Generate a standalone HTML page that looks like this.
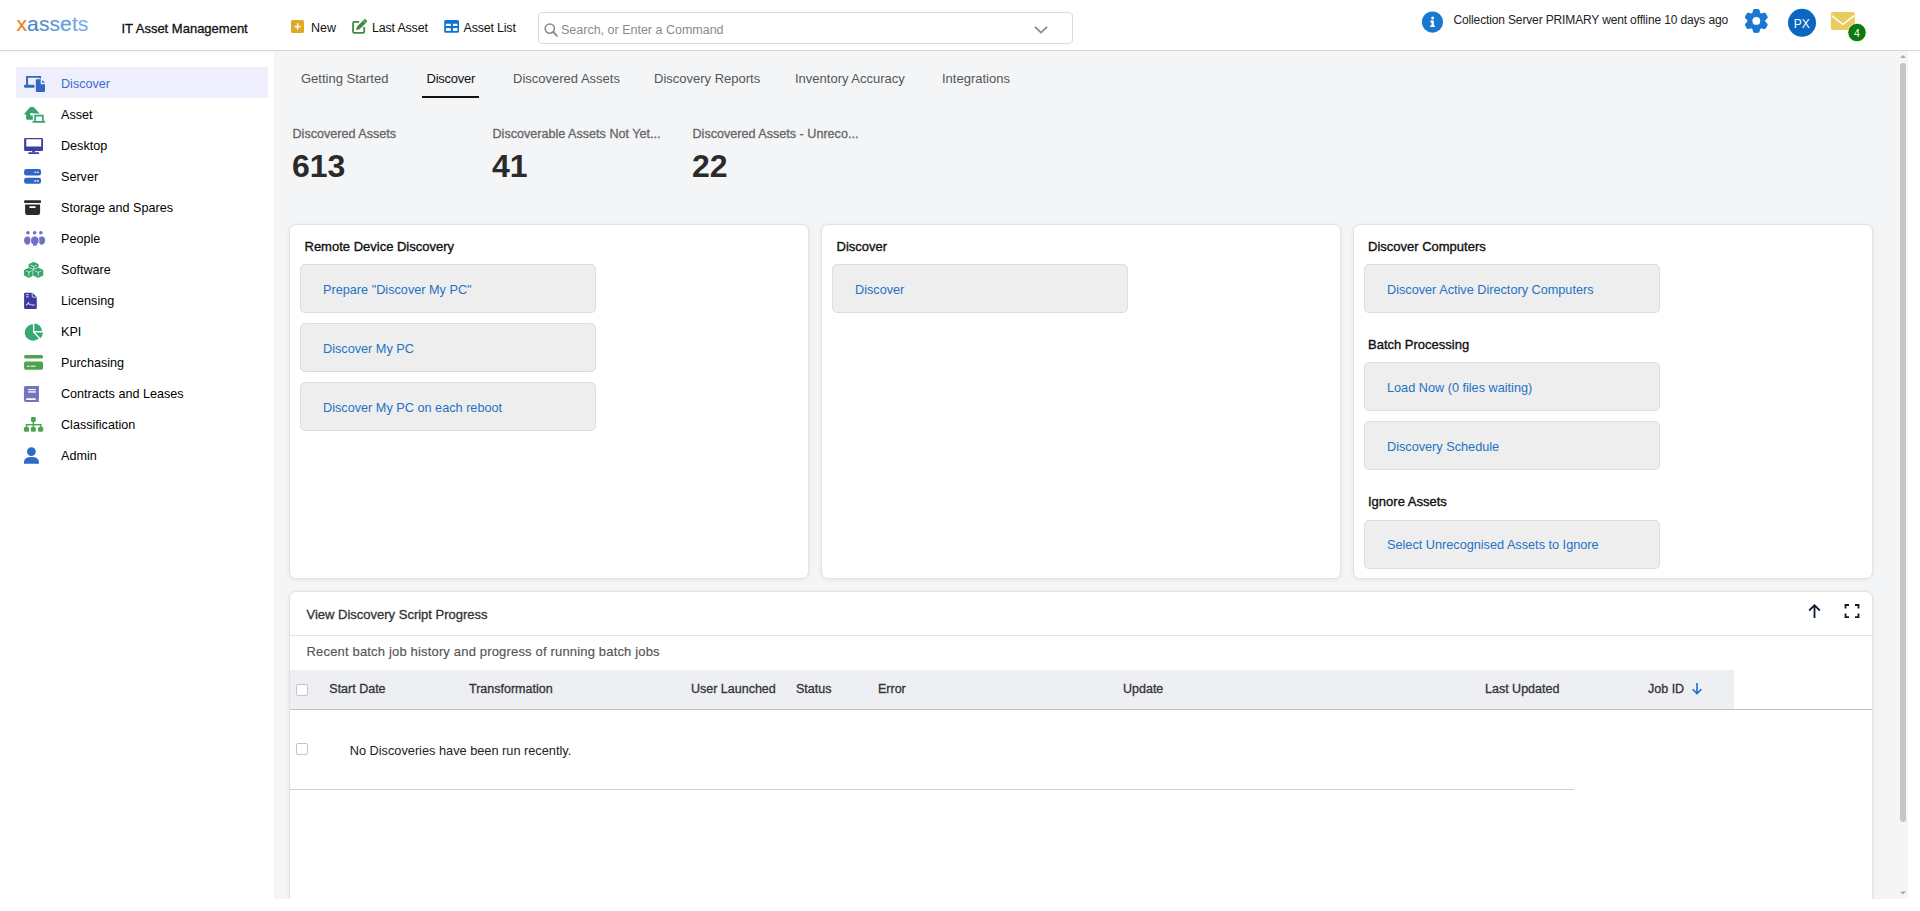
<!DOCTYPE html>
<html><head><meta charset="utf-8">
<style>
*{box-sizing:border-box}
html,body{margin:0;padding:0;width:1920px;height:911px;overflow:hidden;background:#fff;font-family:"Liberation Sans",sans-serif;color:#222}
.a{position:absolute}
.t{position:absolute;white-space:nowrap;line-height:1}
.card{position:absolute;background:#fff;border:1px solid #e3e2e0;border-radius:7px;box-shadow:0 1px 4px rgba(0,0,0,.07)}
.btn{position:absolute;background:#eeeeee;border:1px solid #dedddb;border-radius:5px;width:296px;height:49px}
.btn span{position:absolute;left:22px;top:18.8px;font-size:12.7px;color:#2372c4;white-space:nowrap;line-height:1}
.ct{position:absolute;font-size:13px;-webkit-text-stroke:0.35px #111;color:#111;white-space:nowrap;line-height:1}
.nav{position:absolute;left:61px;font-size:12.6px;color:#000;white-space:nowrap;line-height:1}
.ni{position:absolute;left:24px;width:22px;height:18px}
.tab{position:absolute;top:71.7px;font-size:13px;color:#555;white-space:nowrap;line-height:1}
.ch{position:absolute;top:683.4px;font-size:12.5px;-webkit-text-stroke:0.3px #333;color:#333;white-space:nowrap;line-height:1}
.sl{position:absolute;top:128px;font-size:12.6px;-webkit-text-stroke:0.3px #666;color:#666;white-space:nowrap;line-height:1}
.sn{position:absolute;top:149.8px;font-weight:bold;font-size:32px;color:#2a2a2a;white-space:nowrap;line-height:1}
.cb{position:absolute;width:12px;height:12px;border:1px solid #c4c4c4;border-radius:2px;background:#fff}
</style></head><body>
<!-- header -->
<div class="a" style="left:0;top:50px;width:1920px;height:1px;background:#d9d7d4"></div>
<div class="a" style="left:0;top:51px;width:274px;height:3px;background:linear-gradient(rgba(0,0,0,0.035),rgba(0,0,0,0))"></div>
<div class="t" style="left:16.5px;top:13px;font-size:21px;letter-spacing:0.1px"><span style="color:#ef7d1b;-webkit-text-stroke:0.15px #ef7d1b">x</span><span style="color:#4d87c0;-webkit-text-stroke:0.15px #4d87c0">a</span><span style="color:#5790c9;-webkit-text-stroke:0.15px #5790c9">s</span><span style="color:#6198d1;-webkit-text-stroke:0.15px #6198d1">s</span><span style="color:#6ba0d8;-webkit-text-stroke:0.3px #6ba0d8">e</span><span style="color:#75a7df;-webkit-text-stroke:0.15px #75a7df">t</span><span style="color:#7eade5;-webkit-text-stroke:0.15px #7eade5">s</span></div>
<div class="t" style="left:121.5px;top:21.9px;font-size:13px;-webkit-text-stroke:0.3px #111;color:#111">IT Asset Management</div>
<div class="t" style="left:311px;top:21.9px;font-size:12.5px;color:#111">New</div>
<div class="t" style="left:372px;top:21.9px;font-size:12.5px;letter-spacing:-0.2px;color:#111">Last Asset</div>
<div class="t" style="left:463.5px;top:21.9px;font-size:12.5px;letter-spacing:-0.2px;color:#111">Asset List</div>
<div class="a" style="left:538px;top:12px;width:535px;height:32px;border:1px solid #dcdcdc;border-radius:4px;background:#fff"></div>
<div class="t" style="left:561px;top:24.1px;font-size:12.5px;color:#8a8a8a">Search, or Enter a Command</div>
<div class="t" style="left:1453.5px;top:13.6px;font-size:12px;letter-spacing:-0.14px;color:#222">Collection Server PRIMARY went offline 10 days ago</div>

<!-- sidebar -->
<div class="a" style="left:16px;top:67px;width:252px;height:31px;background:#eeeefc"></div>
<div class="nav" style="top:77.9px;color:#3a6fd0">Discover</div>
<div class="nav" style="top:108.9px">Asset</div>
<div class="nav" style="top:139.9px">Desktop</div>
<div class="nav" style="top:170.9px">Server</div>
<div class="nav" style="top:201.9px">Storage and Spares</div>
<div class="nav" style="top:232.9px">People</div>
<div class="nav" style="top:263.9px">Software</div>
<div class="nav" style="top:294.9px">Licensing</div>
<div class="nav" style="top:325.9px">KPI</div>
<div class="nav" style="top:356.9px">Purchasing</div>
<div class="nav" style="top:387.9px">Contracts and Leases</div>
<div class="nav" style="top:418.9px">Classification</div>
<div class="nav" style="top:449.9px">Admin</div>

<!-- main bg -->
<div class="a" style="left:274px;top:51px;width:1634px;height:848px;background:#f4f5f7"></div>
<div class="a" style="left:1898px;top:51px;width:10px;height:848px;background:#f5f5f5"></div>
<div class="a" style="left:1900px;top:63px;width:6px;height:759px;background:#c6c5c3;border-radius:3px"></div>

<!-- tabs -->
<div class="tab" style="left:301px">Getting Started</div>
<div class="tab" style="left:426.5px;letter-spacing:-0.25px;color:#111">Discover</div>
<div class="a" style="left:422px;top:96px;width:57px;height:2px;background:#111"></div>
<div class="tab" style="left:513px">Discovered Assets</div>
<div class="tab" style="left:654px">Discovery Reports</div>
<div class="tab" style="left:795px">Inventory Accuracy</div>
<div class="tab" style="left:942px">Integrations</div>

<!-- stats -->
<div class="sl" style="left:292.5px">Discovered Assets</div>
<div class="sn" style="left:292px">613</div>
<div class="sl" style="left:492.5px">Discoverable Assets Not Yet...</div>
<div class="sn" style="left:492px">41</div>
<div class="sl" style="left:692.5px">Discovered Assets - Unreco...</div>
<div class="sn" style="left:692px">22</div>

<!-- cards -->
<div class="card" style="left:289px;top:224px;width:520px;height:355px"></div>
<div class="card" style="left:821px;top:224px;width:520px;height:355px"></div>
<div class="card" style="left:1353px;top:224px;width:520px;height:355px"></div>

<div class="ct" style="left:304.5px;top:239.8px">Remote Device Discovery</div>
<div class="btn" style="left:300px;top:264px"><span>Prepare "Discover My PC"</span></div>
<div class="btn" style="left:300px;top:323px"><span>Discover My PC</span></div>
<div class="btn" style="left:300px;top:382px"><span>Discover My PC on each reboot</span></div>

<div class="ct" style="left:836.5px;top:239.8px">Discover</div>
<div class="btn" style="left:832px;top:264px"><span>Discover</span></div>

<div class="ct" style="left:1368px;top:239.8px">Discover Computers</div>
<div class="btn" style="left:1364px;top:264px"><span>Discover Active Directory Computers</span></div>
<div class="ct" style="left:1368px;top:337.9px">Batch Processing</div>
<div class="btn" style="left:1364px;top:362px"><span>Load Now (0 files waiting)</span></div>
<div class="btn" style="left:1364px;top:421px"><span>Discovery Schedule</span></div>
<div class="ct" style="left:1368px;top:494.8px">Ignore Assets</div>
<div class="btn" style="left:1364px;top:519.6px"><span>Select Unrecognised Assets to Ignore</span></div>

<!-- bottom panel -->
<div class="card" style="left:289px;top:591px;width:1584px;height:340px"></div>
<div class="t" style="left:306.5px;top:607.7px;font-size:13px;-webkit-text-stroke:0.3px #333;color:#333">View Discovery Script Progress</div>
<div class="a" style="left:290px;top:635px;width:1582px;height:1px;background:#e2e2e2"></div>
<div class="t" style="left:306.5px;top:645px;font-size:13px;letter-spacing:0.17px;-webkit-text-stroke:0.15px #555;color:#555">Recent batch job history and progress of running batch jobs</div>
<div class="a" style="left:290px;top:670px;width:1444px;height:39px;background:#eeeff3"></div>
<div class="a" style="left:290px;top:709px;width:1582px;height:1px;background:#c2c2c2"></div>
<div class="cb" style="left:296px;top:684px"></div>
<div class="ch" style="left:329.3px">Start Date</div>
<div class="ch" style="left:469px">Transformation</div>
<div class="ch" style="left:691px">User Launched</div>
<div class="ch" style="left:796px">Status</div>
<div class="ch" style="left:878px">Error</div>
<div class="ch" style="left:1123px">Update</div>
<div class="ch" style="left:1485px">Last Updated</div>
<div class="ch" style="left:1648px">Job ID</div>
<div class="cb" style="left:296px;top:743px"></div>
<div class="t" style="left:349.7px;top:744.5px;font-size:12.75px;color:#222">No Discoveries have been run recently.</div>
<div class="a" style="left:290px;top:789px;width:1284px;height:1px;background:#cfcfcf"></div>
<!-- bottom white strip -->
<div class="a" style="left:274px;top:899px;width:1646px;height:12px;background:#fff"></div>
<svg class="a" style="left:0;top:0" width="1920" height="911" viewBox="0 0 1920 911">
<!-- toolbar -->
<rect x="291" y="20" width="13" height="13" rx="1.6" fill="#e0aa28"/>
<rect x="294.3" y="25.9" width="6.6" height="1.4" fill="#fff"/><rect x="296.9" y="23.2" width="1.4" height="6.4" fill="#fff"/>
<path d="M359.2 21.9 H354.2 Q353.1 21.9 353.1 23 V31.8 Q353.1 32.9 354.2 32.9 H363.1 Q364.2 32.9 364.2 31.8 V27.1" fill="none" stroke="#3e8a3e" stroke-width="1.8"/>
<path d="M356 30.2 L357.1 26.6 L364.1 19.6 Q365 18.7 365.9 19.6 L366.7 20.4 Q367.6 21.3 366.7 22.2 L359.6 29.2 Z" fill="#3e8a3e"/>
<path d="M363.3 20.6 L365.8 23.1" stroke="#fff" stroke-width="0.6"/>
<rect x="444.2" y="19.9" width="14.8" height="12.9" rx="1.6" fill="#0a74d6"/>
<rect x="445.9" y="23.75" width="4.9" height="2.25" fill="#fff"/><rect x="452.9" y="23.75" width="4.5" height="2.25" fill="#fff"/>
<rect x="445.9" y="28.1" width="4.9" height="2.8" fill="#fff"/><rect x="452.9" y="28.1" width="4.5" height="2.8" fill="#fff"/>
<!-- search -->
<circle cx="549.8" cy="28.6" r="4.6" fill="none" stroke="#8c8c8c" stroke-width="1.6"/>
<path d="M553.2 32 L557 35.8" stroke="#8c8c8c" stroke-width="1.8" stroke-linecap="round"/>
<path d="M1035 26.8 L1041 32.6 L1047 26.8" fill="none" stroke="#8a8a8a" stroke-width="1.8"/>
<!-- header right -->
<circle cx="1432.5" cy="22.1" r="10.6" fill="#1a78d0"/>
<circle cx="1432.6" cy="18.1" r="1.5" fill="#fff"/>
<path d="M1430.4 20.6 H1433.9 V25.4 H1435 V27.1 H1430.2 V25.4 H1431.4 V22.2 H1430.4 Z" fill="#fff"/>
<path d="M1765.30 20.90 L1765.29 21.21 L1765.28 21.53 L1765.50 21.87 L1765.98 22.26 L1766.44 22.69 L1766.89 23.15 L1767.31 23.64 L1767.71 24.17 L1767.71 24.61 L1767.58 25.00 L1767.43 25.40 L1767.26 25.78 L1767.09 26.16 L1766.90 26.53 L1766.69 26.90 L1766.48 27.26 L1766.25 27.61 L1766.01 27.95 L1765.76 28.29 L1765.49 28.61 L1765.22 28.93 L1764.84 29.14 L1764.18 29.06 L1763.54 28.94 L1762.92 28.79 L1762.32 28.60 L1761.74 28.39 L1761.33 28.36 L1761.07 28.53 L1760.80 28.69 L1760.53 28.85 L1760.25 28.99 L1760.06 29.35 L1759.96 29.97 L1759.82 30.58 L1759.64 31.19 L1759.43 31.81 L1759.17 32.42 L1758.79 32.64 L1758.38 32.72 L1757.97 32.78 L1757.55 32.83 L1757.14 32.87 L1756.72 32.89 L1756.30 32.90 L1755.88 32.89 L1755.46 32.87 L1755.05 32.83 L1754.63 32.78 L1754.22 32.72 L1753.81 32.64 L1753.43 32.42 L1753.17 31.81 L1752.96 31.19 L1752.78 30.58 L1752.64 29.97 L1752.54 29.35 L1752.35 28.99 L1752.07 28.85 L1751.80 28.69 L1751.53 28.53 L1751.27 28.36 L1750.86 28.39 L1750.28 28.60 L1749.68 28.79 L1749.06 28.94 L1748.42 29.06 L1747.76 29.14 L1747.38 28.93 L1747.11 28.61 L1746.84 28.29 L1746.59 27.95 L1746.35 27.61 L1746.12 27.26 L1745.91 26.90 L1745.70 26.53 L1745.51 26.16 L1745.34 25.78 L1745.17 25.40 L1745.02 25.00 L1744.89 24.61 L1744.89 24.17 L1745.29 23.64 L1745.71 23.15 L1746.16 22.69 L1746.62 22.26 L1747.10 21.87 L1747.32 21.53 L1747.31 21.21 L1747.30 20.90 L1747.31 20.59 L1747.32 20.27 L1747.10 19.93 L1746.62 19.54 L1746.16 19.11 L1745.71 18.65 L1745.29 18.16 L1744.89 17.63 L1744.89 17.19 L1745.02 16.80 L1745.17 16.40 L1745.34 16.02 L1745.51 15.64 L1745.70 15.27 L1745.91 14.90 L1746.12 14.54 L1746.35 14.19 L1746.59 13.85 L1746.84 13.51 L1747.11 13.19 L1747.38 12.87 L1747.76 12.66 L1748.42 12.74 L1749.06 12.86 L1749.68 13.01 L1750.28 13.20 L1750.86 13.41 L1751.27 13.44 L1751.53 13.27 L1751.80 13.11 L1752.07 12.95 L1752.35 12.81 L1752.54 12.45 L1752.64 11.83 L1752.78 11.22 L1752.96 10.61 L1753.17 9.99 L1753.43 9.38 L1753.81 9.16 L1754.22 9.08 L1754.63 9.02 L1755.05 8.97 L1755.46 8.93 L1755.88 8.91 L1756.30 8.90 L1756.72 8.91 L1757.14 8.93 L1757.55 8.97 L1757.97 9.02 L1758.38 9.08 L1758.79 9.16 L1759.17 9.38 L1759.43 9.99 L1759.64 10.61 L1759.82 11.22 L1759.96 11.83 L1760.06 12.45 L1760.25 12.81 L1760.53 12.95 L1760.80 13.11 L1761.07 13.27 L1761.33 13.44 L1761.74 13.41 L1762.32 13.20 L1762.92 13.01 L1763.54 12.86 L1764.18 12.74 L1764.84 12.66 L1765.22 12.87 L1765.49 13.19 L1765.76 13.51 L1766.01 13.85 L1766.25 14.19 L1766.48 14.54 L1766.69 14.90 L1766.90 15.27 L1767.09 15.64 L1767.26 16.02 L1767.43 16.40 L1767.58 16.80 L1767.71 17.19 L1767.71 17.63 L1767.31 18.16 L1766.89 18.65 L1766.44 19.11 L1765.98 19.54 L1765.50 19.93 L1765.28 20.27 L1765.29 20.59 Z" fill="#1a78d2"/>
<circle cx="1756.3" cy="20.9" r="3.9" fill="#fff"/>
<circle cx="1802" cy="22.8" r="14" fill="#0a67c0"/>
<text x="1801.8" y="27.6" font-family="Liberation Sans" font-size="12" fill="#fff" text-anchor="middle">PX</text>
<rect x="1830.8" y="12" width="24.1" height="18" rx="2.2" fill="#ebcb5f"/>
<path d="M1831.6 15.6 L1843 24.4 L1854.2 15.6" fill="none" stroke="#fff" stroke-width="1.5"/>
<circle cx="1857" cy="32.5" r="9.2" fill="#0c7a0c" stroke="#fff" stroke-width="0.8"/>
<text x="1856.8" y="36.9" font-family="Liberation Sans" font-size="10.5" fill="#fff" text-anchor="middle">4</text>
<!-- sidebar icons -->
<g fill="#3367c0">
<path d="M26.1 75.9 H41.1 V78.2 Q41.1 78.6 40.6 78.6 H39.6 Q39.3 78.6 39.3 78.2 V77.8 H28.1 V85 H26.1 Z"/>
<rect x="24" y="84.8" width="10.6" height="3" rx="1.2"/>
<path d="M36.8 79.2 H40.7 V83.2 Q40.7 84.2 41.7 84.2 H45 V90.9 Q45 91.9 44 91.9 H36.8 Q35.8 91.9 35.8 90.9 V80.2 Q35.8 79.2 36.8 79.2 Z"/>
<path d="M42.1 79.9 L45 82.7 H42.1 Z"/>
</g>
<g fill="#35a56e">
<path d="M30.2 107 H33.5 L39.8 113.4 H32.8 V119.8 H27.1 Q26.1 119.8 26.1 118.8 V114.6 H24.6 Q23.6 114.6 24.3 113.8 Z"/>
<rect x="30.2" y="113.1" width="2.7" height="2.4" rx="0.8" fill="#fff"/>
<path fill-rule="evenodd" d="M34.2 114.8 H43.7 V121.2 H34.2 Z M35.9 116.4 V121.2 H42 V116.4 Z"/>
<rect x="32.3" y="121" width="13.1" height="1.7" rx="0.8"/>
</g>
<g fill="#3f3ea4">
<path fill-rule="evenodd" d="M25.3 137.9 H41.8 Q43 137.9 43 139.1 V149.7 Q43 150.9 41.8 150.9 H25.3 Q24.1 150.9 24.1 149.7 V139.1 Q24.1 137.9 25.3 137.9 Z M26.25 139.2 V146.6 H41.2 V139.2 Z"/>
<rect x="32.2" y="150.5" width="2.6" height="2" />
<rect x="28.2" y="152.2" width="10.9" height="1.7" rx="0.7"/>
</g>
<g fill="#3167c4">
<rect x="24.1" y="169.1" width="16.95" height="6.3" rx="2.2"/>
<rect x="24.1" y="177.7" width="16.95" height="6.1" rx="2.2"/>
</g>
<g fill="#fff"><rect x="34.4" y="171.7" width="1.6" height="1.2"/><rect x="36.8" y="171.7" width="1.9" height="1.2"/><rect x="34.4" y="180.2" width="1.6" height="1.4"/><rect x="36.8" y="180.2" width="1.9" height="1.4"/></g>
<g fill="#2b2b2b">
<rect x="24.1" y="200.2" width="16.95" height="2.7" rx="0.9"/>
<path d="M25.1 204.6 H40.1 V212.7 Q40.1 214.9 37.9 214.9 H27.3 Q25.1 214.9 25.1 212.7 Z"/>
</g>
<rect x="29.2" y="206.3" width="6.6" height="1.6" rx="0.8" fill="#fff"/>
<g fill="#7070c6">
<circle cx="28" cy="232.8" r="1.8"/><circle cx="34.6" cy="232.8" r="1.8"/><circle cx="40.9" cy="232.8" r="1.8"/>
<ellipse cx="27.4" cy="240.3" rx="3.3" ry="3.9"/><rect x="25.9" y="241.5" width="3.2" height="3.1" rx="0.6"/>
<ellipse cx="41.8" cy="240.3" rx="3.3" ry="3.9"/><rect x="40.1" y="241.5" width="3.2" height="3.1" rx="0.6"/>
<ellipse cx="34.8" cy="240.6" rx="4.3" ry="4.5" stroke="#fff" stroke-width="0.8"/><rect x="33" y="242.5" width="3.6" height="3.2" rx="0.6"/>
</g>
<path d="M33.65 262.60 L38.00 264.56 L38.00 270.44 L33.65 272.40 L29.30 270.44 L29.30 264.56 Z" fill="#fff" stroke="#fff" stroke-width="2.6" stroke-linejoin="round"/>
<path d="M33.65 262.60 L38.00 264.56 L38.00 270.44 L33.65 272.40 L29.30 270.44 L29.30 264.56 Z" fill="#35a56e" stroke="#35a56e" stroke-width="1.4" stroke-linejoin="round"/>
<path d="M30.50 265.06 L33.65 266.52 L36.80 265.06 M33.65 266.52 V271.20" fill="none" stroke="#fff" stroke-width="0.7"/>
<path d="M28.85 268.50 L32.90 270.32 L32.90 275.18 L28.85 277.00 L24.80 275.18 L24.80 270.32 Z" fill="#fff" stroke="#fff" stroke-width="2.6" stroke-linejoin="round"/>
<path d="M28.85 268.50 L32.90 270.32 L32.90 275.18 L28.85 277.00 L24.80 275.18 L24.80 270.32 Z" fill="#35a56e" stroke="#35a56e" stroke-width="1.4" stroke-linejoin="round"/>
<path d="M26.00 270.82 L28.85 272.14 L31.70 270.82 M28.85 272.14 V275.80" fill="none" stroke="#fff" stroke-width="0.7"/>
<path d="M38.20 268.50 L42.50 270.44 L42.50 275.06 L38.20 277.00 L33.90 275.06 L33.90 270.44 Z" fill="#fff" stroke="#fff" stroke-width="2.6" stroke-linejoin="round"/>
<path d="M38.20 268.50 L42.50 270.44 L42.50 275.06 L38.20 277.00 L33.90 275.06 L33.90 270.44 Z" fill="#35a56e" stroke="#35a56e" stroke-width="1.4" stroke-linejoin="round"/>
<path d="M35.10 270.94 L38.20 272.37 L41.30 270.94 M38.20 272.37 V275.80" fill="none" stroke="#fff" stroke-width="0.7"/>
<g fill="#3d3a9e">
<path d="M25.1 292.8 H32.5 L36.8 297.1 V307.9 Q36.8 308.9 35.8 308.9 H25.1 Q24.1 308.9 24.1 307.9 V293.8 Q24.1 292.8 25.1 292.8 Z"/>
</g>
<path d="M32.2 293 V296.2 Q32.2 297.2 33.2 297.2 H36.7" fill="none" stroke="#fff" stroke-width="0.8"/>
<g fill="#fff"><rect x="26.2" y="294.2" width="2.4" height="0.9"/><rect x="26.2" y="296.4" width="2.4" height="0.9"/></g>
<path d="M26 305 L27.4 304.6 L28.4 302.4 L29.3 304.7 L30.6 304.3 L31.6 305 H34.6" fill="none" stroke="#fff" stroke-width="0.9"/>
<g fill="#36a872">
<path d="M33 324.3 V332.5 L38.8 338.3 A8.2 8.2 0 1 1 33 324.3 Z"/>
<path d="M34.3 323.4 A7.7 7.7 0 0 1 42 331.1 H34.3 Z"/>
<path d="M35.1 332.6 H43 A8.2 8.2 0 0 1 40.4 338.2 Z"/>
</g>
<g fill="#4ea350">
<rect x="24.1" y="355.1" width="18.9" height="3.3" rx="1.5"/>
<rect x="24.1" y="361.4" width="18.9" height="8.3" rx="1.6"/>
</g>
<g fill="#fff"><rect x="26.9" y="365.7" width="2.6" height="1"/><rect x="30.6" y="365.7" width="5" height="1"/></g>
<g fill="#7473c0">
<path d="M25.5 385.9 H38.95 V399.6 H38.4 V400.3 H38.95 V401.9 H26 Q23.95 401.9 23.95 399.9 V387.4 Q23.95 385.9 25.5 385.9 Z"/>
</g>
<g fill="#fff"><rect x="28.1" y="389.1" width="7.7" height="1.1"/><rect x="28.1" y="391.3" width="7.7" height="1.3"/><rect x="25.9" y="398.2" width="10" height="1.7" rx="0.8"/></g>
<g fill="#4ea350">
<rect x="30.9" y="417" width="4.9" height="4.9" rx="1.3"/>
<rect x="23.95" y="426.9" width="5.1" height="4.9" rx="1.3"/><rect x="30.9" y="426.9" width="4.9" height="4.9" rx="1.3"/><rect x="38.1" y="426.9" width="5.1" height="4.9" rx="1.3"/>
<rect x="32.65" y="421" width="1.4" height="6"/>
<rect x="25.8" y="424" width="15.6" height="1.4"/>
<rect x="25.8" y="424" width="1.4" height="3.2"/><rect x="40" y="424" width="1.4" height="3.2"/>
</g>
<g fill="#2f6ac3">
<circle cx="31.4" cy="451.6" r="4.4"/>
<path d="M23.95 463.7 V462.3 Q23.95 457.1 31.45 457.1 Q38.95 457.1 38.95 462.3 V463.7 Z"/>
</g>
<!-- panel icons -->
<path d="M1814.5 605.2 V618 M1809.2 610.5 L1814.5 605.2 L1819.8 610.5" fill="none" stroke="#0d1b33" stroke-width="1.8"/>
<path d="M1845.5 608.6 V605 H1849 M1855 605 H1858.5 V608.6 M1858.5 613.6 V617.2 H1855 M1849 617.2 H1845.5 V613.6" fill="none" stroke="#0d1b33" stroke-width="1.8"/>
<path d="M1697 683 V693.6 M1692.6 689.2 L1697 693.6 L1701.4 689.2" fill="none" stroke="#1a6fd6" stroke-width="1.6"/>
<!-- scrollbar arrows -->
<path d="M1900 58 L1903 55 L1906 58 Z" fill="#a8a8a8"/>
<path d="M1900 891.5 H1906 L1903 894.5 Z" fill="#a8a8a8"/>
</svg>

</body></html>
